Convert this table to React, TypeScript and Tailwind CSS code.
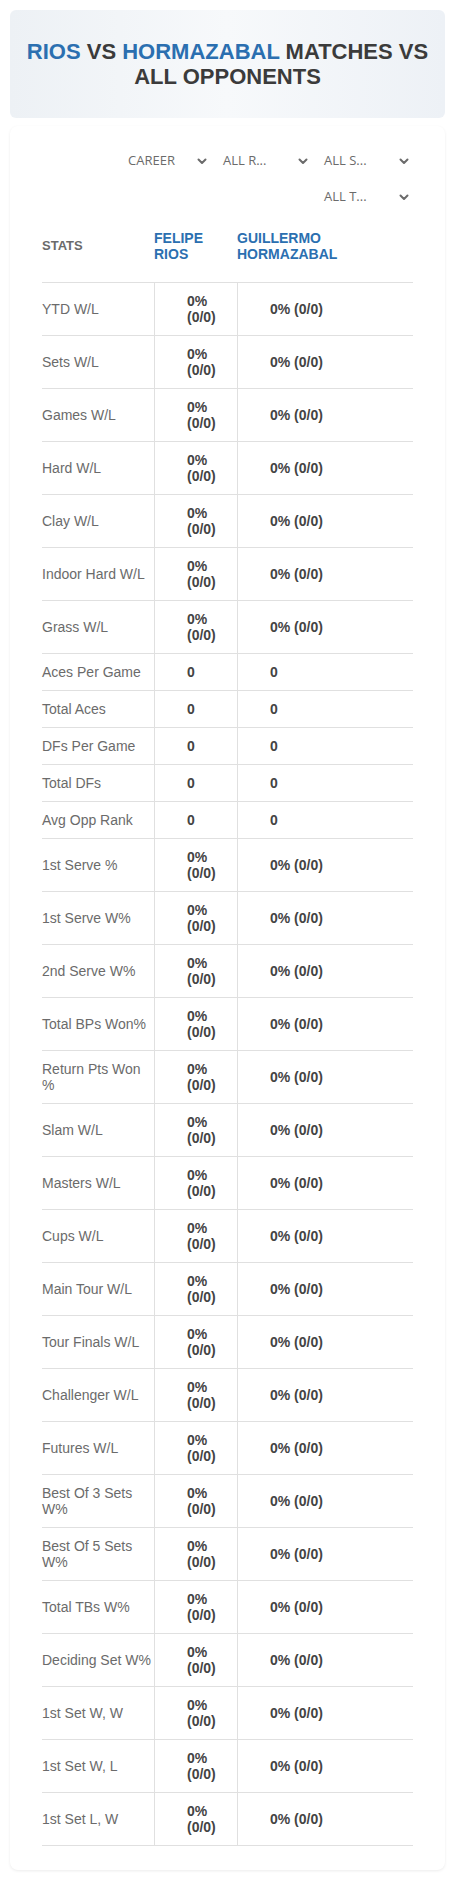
import React from "react";

type Row = { label: string; a: string; b: string };

const wl = (label: string): Row => ({ label, a: "0% (0/0)", b: "0% (0/0)" });
const zero = (label: string): Row => ({ label, a: "0", b: "0" });

const rows: Row[] = [
  wl("YTD W/L"),
  wl("Sets W/L"),
  wl("Games W/L"),
  wl("Hard W/L"),
  wl("Clay W/L"),
  wl("Indoor Hard W/L"),
  wl("Grass W/L"),
  zero("Aces Per Game"),
  zero("Total Aces"),
  zero("DFs Per Game"),
  zero("Total DFs"),
  zero("Avg Opp Rank"),
  wl("1st Serve %"),
  wl("1st Serve W%"),
  wl("2nd Serve W%"),
  wl("Total BPs Won%"),
  wl("Return Pts Won %"),
  wl("Slam W/L"),
  wl("Masters W/L"),
  wl("Cups W/L"),
  wl("Main Tour W/L"),
  wl("Tour Finals W/L"),
  wl("Challenger W/L"),
  wl("Futures W/L"),
  wl("Best Of 3 Sets W%"),
  wl("Best Of 5 Sets W%"),
  wl("Total TBs W%"),
  wl("Deciding Set W%"),
  wl("1st Set W, W"),
  wl("1st Set W, L"),
  wl("1st Set L, W"),
];

function Chevron() {
  return (
    <svg width="10" height="7" viewBox="0 0 10 7" className="shrink-0">
      <polyline points="1.5,1.5 5,5 8.5,1.5" fill="none" stroke="#6b6b6b" strokeWidth="2" strokeLinecap="round" strokeLinejoin="round" />
    </svg>
  );
}

function Select({ label, w }: { label: string; w: string }) {
  return (
    <div className={`flex h-[30px] items-center justify-between pl-[4px] pr-[4px] ${w}`}>
      <span className="text-[13px] text-[#6b6b6b] font-['Open_Sans',sans-serif]">{label}</span>
      <Chevron />
    </div>
  );
}

export default function App() {
  return (
    <div className="w-[455px] bg-white px-[10px] pt-[10px] pb-[10px] font-['Liberation_Sans',Arial,sans-serif]">
      <div className="rounded-[6px] bg-gradient-to-r from-[#edf1f5] via-[#f7f9fb] to-[#edf1f6] px-[16px] pt-[29px] pb-[29px]">
        <h1 className="text-center text-[22px] font-bold leading-[25px] text-[#3b3b3b]">
          <span className="text-[#2b6fb0]">RIOS</span> VS <span className="text-[#2b6fb0]">HORMAZABAL</span> MATCHES VS ALL OPPONENTS
        </h1>
      </div>

      <div className="mt-[8px] rounded-[8px] bg-white px-[32px] pt-[20px] pb-[24px] shadow-[0_1px_3px_rgba(0,0,0,0.08)]">
        <div className="flex flex-wrap justify-end gap-x-[8px] gap-y-[6px]">
          <Select label="CAREER" w="w-[87px]" />
          <Select label="ALL R..." w="w-[93px]" />
          <Select label="ALL S..." w="w-[93px]" />
          <Select label="ALL T..." w="w-[93px]" />
        </div>

        <div>
          <div className="grid grid-cols-[112px_83px_176px] border-b border-[#e0e0e0] pt-[18px] pb-[20px] text-[14px] font-bold leading-[16px]">
            <div className="flex items-center text-[13px] text-[#6b6b6b]">STATS</div>
            <div className="text-[#2b6fb0]">FELIPE<br />RIOS</div>
            <div className="text-[#2b6fb0]">GUILLERMO<br />HORMAZABAL</div>
          </div>
          {rows.map((r) => (
            <div key={r.label} className="grid grid-cols-[112px_83px_176px] border-b border-[#e0e0e0] text-[14px] leading-[16px]">
              <div className="flex items-center py-[10px] text-[#6b6b6b]">{r.label}</div>
              <div className="flex items-center border-l border-[#e0e0e0] py-[10px] pl-[32px] font-bold text-[#444444]">{r.a}</div>
              <div className="flex items-center border-l border-[#e0e0e0] py-[10px] pl-[32px] font-bold text-[#444444]">{r.b}</div>
            </div>
          ))}
        </div>
      </div>
    </div>
  );
}
